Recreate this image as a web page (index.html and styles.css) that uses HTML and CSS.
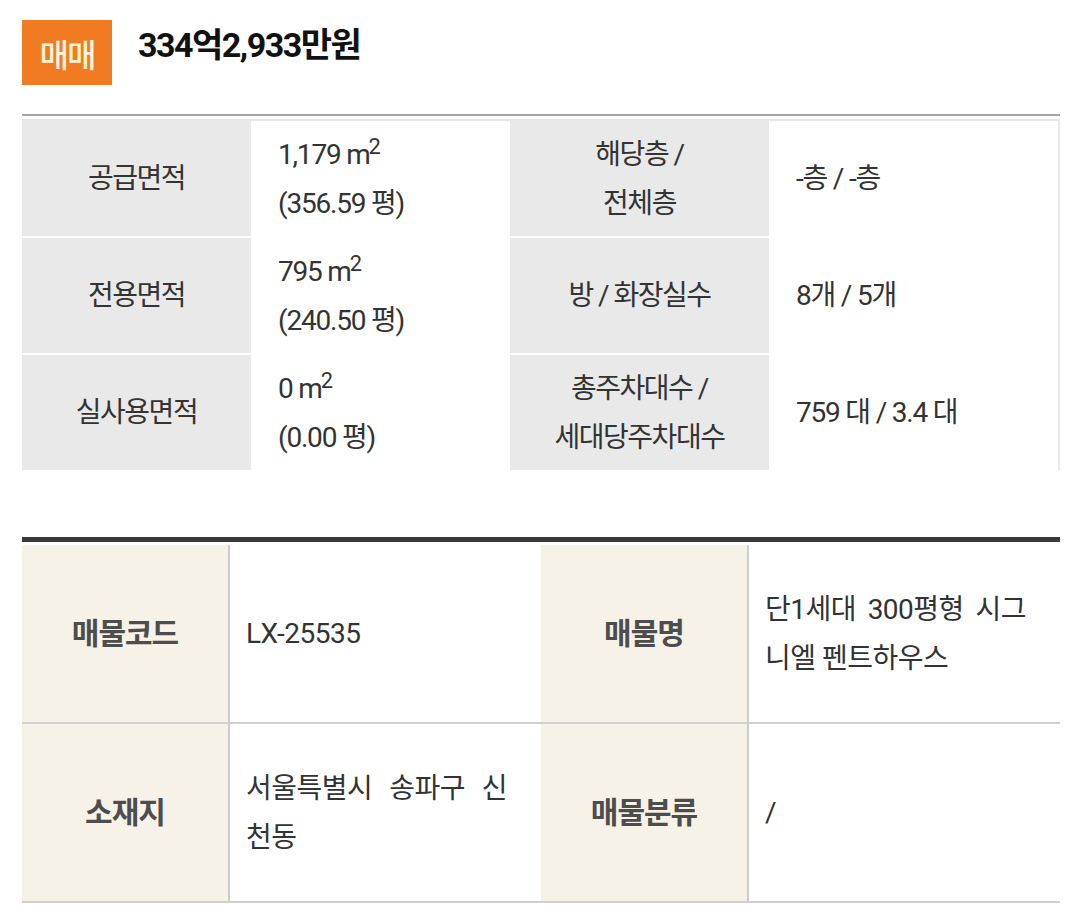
FILE: index.html
```html
<!DOCTYPE html>
<html lang="ko">
<head>
<meta charset="utf-8">
<title>매물 정보</title>
<link rel="stylesheet" href="styles.css">
</head>
<body>
<div class="page">
  <header class="price-head">
    <span class="deal-badge">매매</span>
    <h1 class="price">334억2,933만원</h1>
  </header>
  <div class="rule"></div>

  <div class="spec">
    <div class="spec-th">공급면적</div>
    <div class="spec-td"><div class="val">1,179 m<sup>2</sup><br>(356.59 평)</div></div>
    <div class="spec-th">해당층 /<br>전체층</div>
    <div class="spec-td"><div class="val">-층 / -층</div></div>

    <div class="spec-th">전용면적</div>
    <div class="spec-td"><div class="val">795 m<sup>2</sup><br>(240.50 평)</div></div>
    <div class="spec-th">방 / 화장실수</div>
    <div class="spec-td"><div class="val">8개 / 5개</div></div>

    <div class="spec-th">실사용면적</div>
    <div class="spec-td"><div class="val">0 m<sup>2</sup><br>(0.00 평)</div></div>
    <div class="spec-th">총주차대수 /<br>세대당주차대수</div>
    <div class="spec-td"><div class="val">759 대 / 3.4 대</div></div>
  </div>

  <div class="info">
    <div class="info-th">매물코드</div>
    <div class="info-td"><div class="val">LX-25535</div></div>
    <div class="info-th">매물명</div>
    <div class="info-td"><div class="val">단1세대 300평형 시그니엘 펜트하우스</div></div>

    <div class="info-th">소재지</div>
    <div class="info-td"><div class="val">서울특별시 송파구 신천동</div></div>
    <div class="info-th">매물분류</div>
    <div class="info-td"><div class="val">/</div></div>
  </div>
</div>
</body>
</html>
```

FILE: styles.css
```css
* { box-sizing: border-box; }

body {
  margin: 0;
  background: #ffffff;
  color: #333333;
  font-family: Roboto, "Noto Sans CJK KR", sans-serif;
}

.page {
  width: 1038px;
  margin-left: 22px;
  padding-top: 20px;
}

.price-head {
  display: flex;
  align-items: flex-start;
  gap: 26px;
  height: 94px;
}

.deal-badge {
  width: 90px;
  height: 65px;
  background: #f07b23;
  color: #fff4d8;
  font-size: 32px;
  font-weight: 500;
  letter-spacing: -2px;
  display: flex;
  align-items: center;
  justify-content: center;
}

.price {
  margin: 0;
  font-size: 34px;
  line-height: 50px;
  font-weight: 700;
  letter-spacing: -1.5px;
  color: #111111;
}

.rule {
  height: 2px;
  background: #a6a6a6;
}

.spec {
  margin-top: 3px;
  display: grid;
  grid-template-columns: 229px 259px 259px 1fr;
  grid-auto-rows: 115px;
  row-gap: 2px;
  border-top: 2px solid #e9e9e9;
  border-right: 2px solid #e9e9e9;
  font-size: 28px;
  letter-spacing: -1.5px;
  line-height: 49px;
  color: #333333;
}

.spec-th {
  background: #e9e9e9;
  display: flex;
  align-items: center;
  justify-content: center;
  text-align: center;
}

.spec-td {
  display: flex;
  align-items: center;
  padding-left: 27px;
  background: #ffffff;
  letter-spacing: -1.2px;
}

sup {
  font-size: 0.78em;
  line-height: 0;
  vertical-align: 0.42em;
  margin-left: -1px;
}

.info {
  margin-top: 67px;
  border-top: 5px solid #3a3a3a;
  padding-top: 3px;
  display: grid;
  grid-template-columns: 208px 311px 208px 1fr;
  grid-auto-rows: 179px;
  font-size: 28px;
  line-height: 49px;
  letter-spacing: -0.5px;
}

.info-th {
  background: #f7f2e7;
  border-right: 2px solid #cccccc;
  border-bottom: 2px solid #d0d0d0;
  color: #4d4d4d;
  font-size: 30px;
  font-weight: 700;
  letter-spacing: -1px;
  display: flex;
  align-items: center;
  justify-content: center;
}

.info-td {
  border-bottom: 2px solid #d0d0d0;
  padding: 0 34px 0 16px;
  display: flex;
  align-items: center;
  color: #333333;
}

.info-td .val {
  width: 100%;
  text-align: justify;
  word-break: break-all;
}
```
